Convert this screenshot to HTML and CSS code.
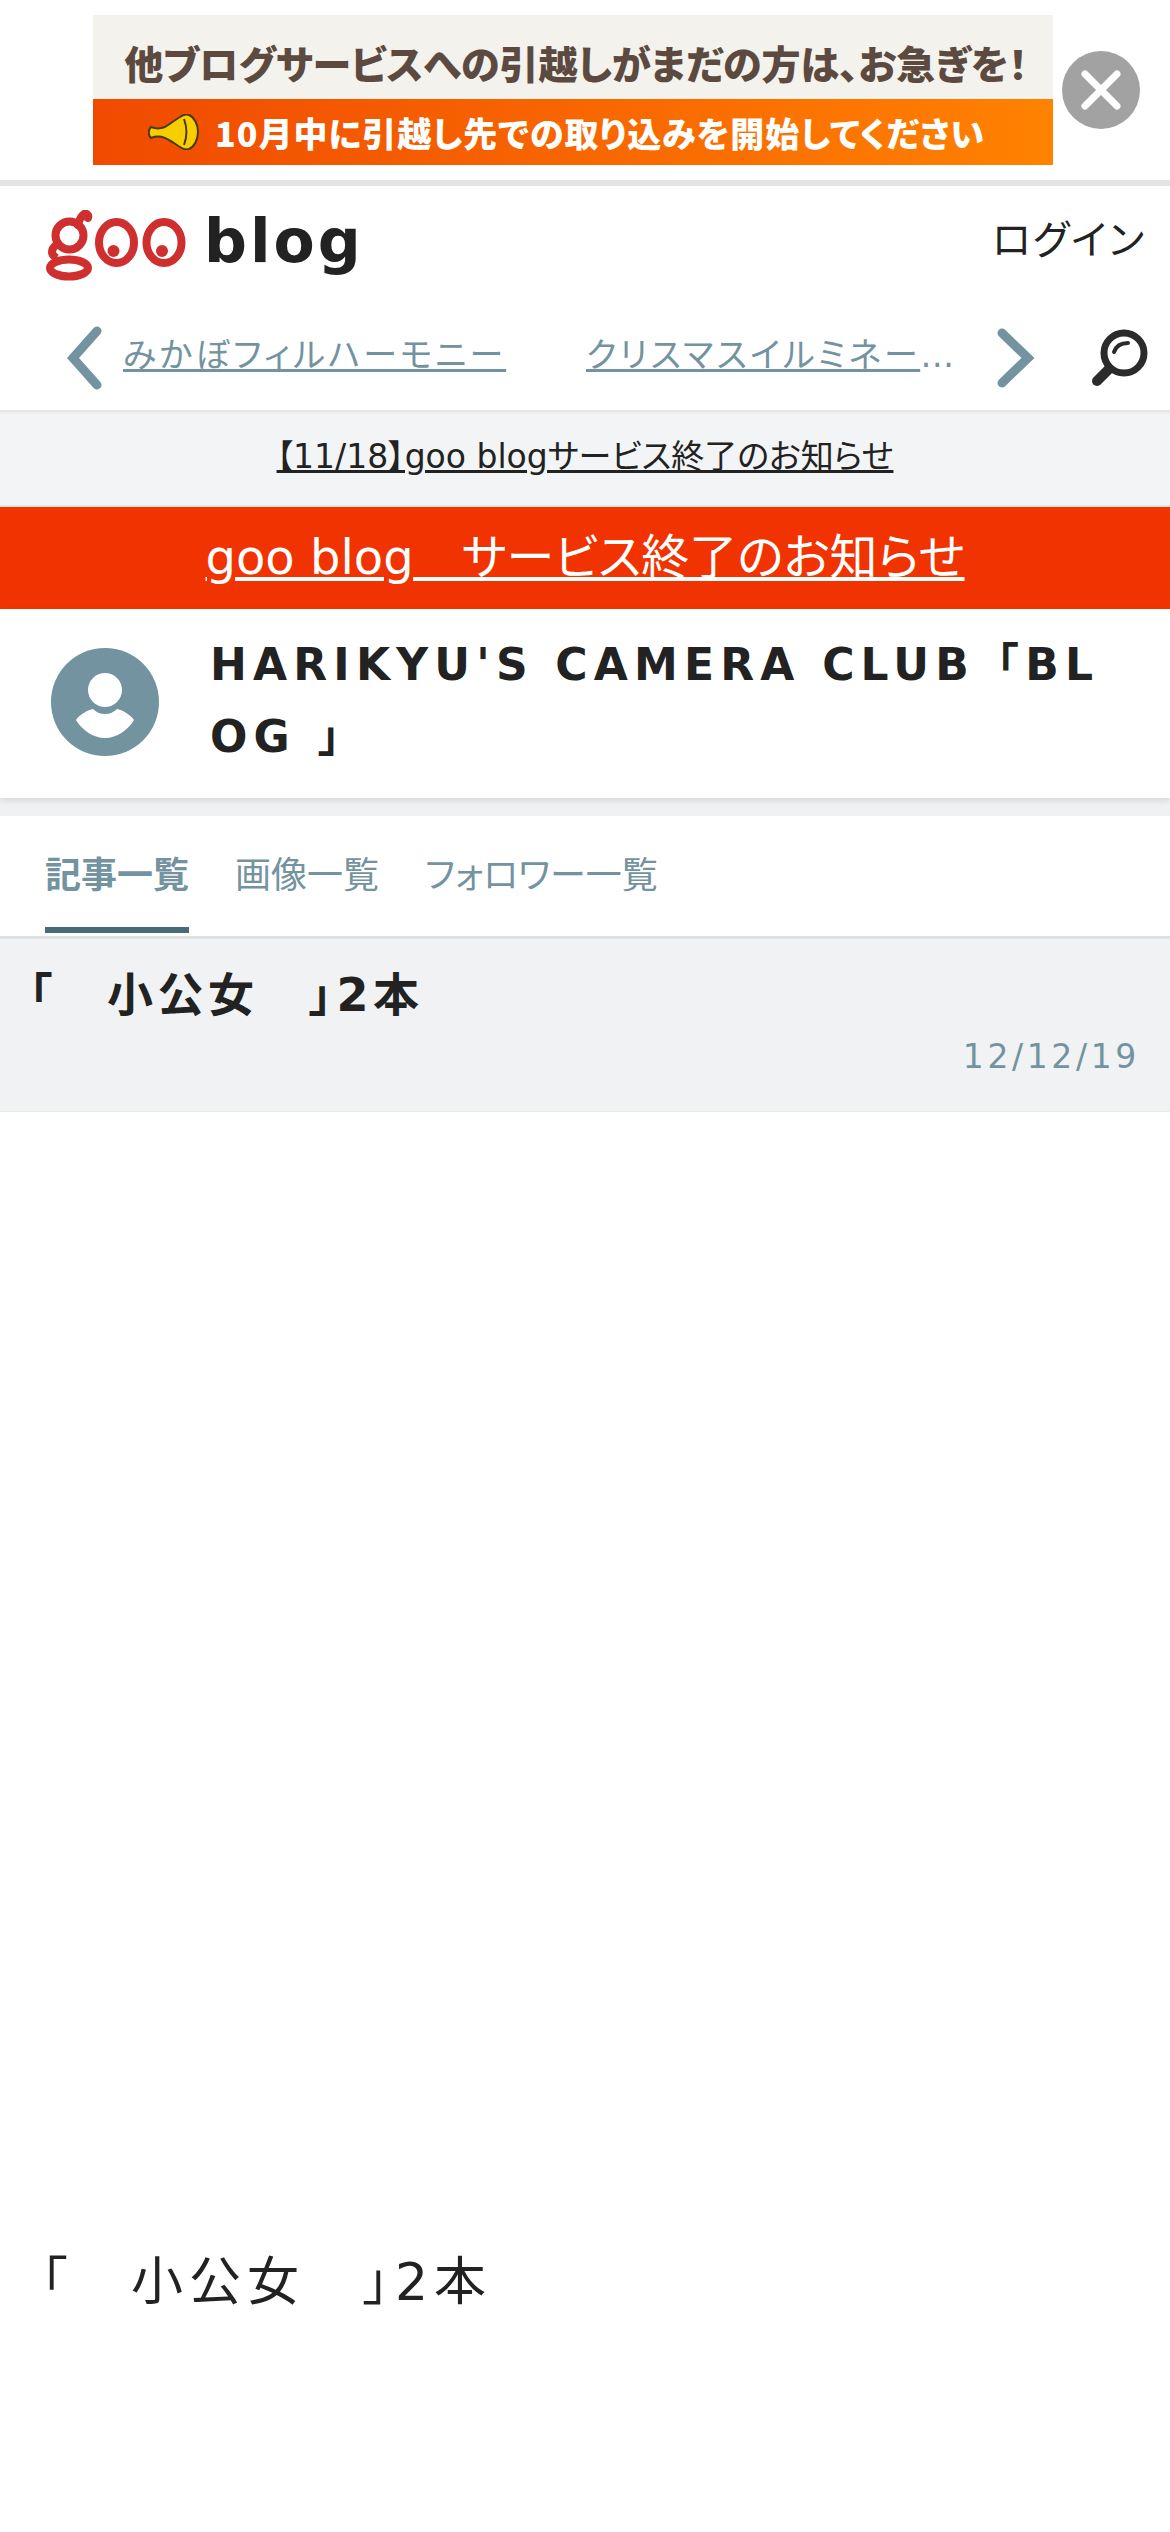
FILE: index.html
```html
<!DOCTYPE html>
<html lang="ja">
<head>
<meta charset="utf-8"/>
<meta content="width=device-width, initial-scale=1.0" name="viewport"/>
<title>HARIKYU'S CAMERA CLUB「BLOG 」</title>
<link rel="stylesheet" href="styles.css">
</head>
<body>
<div class="banner">
  <a class="banner-ad" href="#">
    <div class="ad-top">他ブログサービスへの引越しがまだの方は、お急ぎを！</div>
    <div class="ad-bottom">
      <svg class="ad-horn" viewBox="0 0 52 36" width="52" height="36">
        <path d="M3 13c5 2 9 2 14 0 5-3 10-7 15-10 3-2 6-3 9-2 5 2 9 9 9 17s-4 15-9 17c-3 1-6 0-9-2-5-3-10-7-15-9-5-2-9-2-14 0-3-3-3-8 0-11z" fill="#f7cf00" stroke="#4a3a10" stroke-width="2"/>
        <path d="M36 5c3 8 3 18 0 26" fill="none" stroke="#4a3a10" stroke-width="2"/>
      </svg>
      <span>10月中に引越し先での取り込みを開始してください</span>
    </div>
  </a>
  <button class="banner-close" aria-label="閉じる">
    <svg viewBox="0 0 78 78" width="78" height="78"><path d="M23 23l32 32M55 23L23 55" stroke="#fff" stroke-width="7" stroke-linecap="round" fill="none"/></svg>
  </button>
</div>

<header class="site-header">
  <div class="logo-row">
    <a class="logo" href="#">
      <svg viewBox="0 0 141 72" width="141" height="72" role="img" aria-label="goo">
        <g fill="none" stroke="#cf2f2f" stroke-width="8">
          <ellipse cx="24.5" cy="25.5" rx="14" ry="14"/>
          <path d="M33 15c1-4 3-9 6-11 3-1 5 1 4 4" stroke-linecap="round"/>
          <path d="M11 35c-5 4-6 10 1 13"/>
          <ellipse cx="24" cy="58" rx="19" ry="8.5"/>
          <ellipse cx="71.5" cy="32.5" rx="17.5" ry="20.5"/>
          <ellipse cx="119" cy="32.5" rx="17.5" ry="20.5"/>
        </g>
        <circle cx="68.5" cy="41" r="6" fill="#cf2f2f"/>
        <circle cx="117" cy="41" r="6" fill="#cf2f2f"/>
      </svg>
      <span class="logo-text">blog</span>
    </a>
    <a class="login" href="#">ログイン</a>
  </div>
  <nav class="keyword-row">
    <svg class="chevron-left" viewBox="0 0 44 64" width="44" height="64"><path d="M35 5L11 32l24 27" fill="none" stroke="#7393a0" stroke-width="9" stroke-linecap="round"/></svg>
    <a class="keyword keyword-first" href="#">みかぼフィルハーモニー</a>
    <a class="keyword keyword-second" href="#">クリスマスイルミネーション</a>
    <svg class="chevron-right" viewBox="0 0 44 64" width="44" height="64"><path d="M9 7l26 25L9 57" fill="none" stroke="#7393a0" stroke-width="9" stroke-linecap="round"/></svg>
    <svg class="search-icon" viewBox="0 0 64 64" width="64" height="64">
      <circle cx="36" cy="27" r="20" fill="none" stroke="#2b2b2b" stroke-width="7"/>
      <path d="M26 26c2-6 7-9 14-9" fill="none" stroke="#2b2b2b" stroke-width="4" stroke-linecap="round"/>
      <path d="M21 43L9 55" stroke="#2b2b2b" stroke-width="10" stroke-linecap="round"/>
    </svg>
  </nav>
</header>

<div class="notice"><a href="#">【11/18】goo blogサービス終了のお知らせ</a></div>
<div class="alert"><a href="#">goo blog　サービス終了のお知らせ</a></div>

<section class="blog-head">
  <svg class="avatar" viewBox="0 0 108 108" width="108" height="108">
    <circle cx="54" cy="54" r="54" fill="#7393a0"/>
    <circle cx="54" cy="42" r="17" fill="#fff"/>
    <path d="M25 72c4-6 12-10 17-11 3 3 7 5 12 5s9-2 12-5c5 1 13 5 17 11-6 10-17 18-29 18s-23-8-29-18z" fill="#fff"/>
  </svg>
  <h1 class="blog-title">Harikyu's camera club「blog 」</h1>
</section>

<div class="tabs-wrap">
  <ul class="tabs">
    <li class="tab tab-active">記事一覧</li>
    <li class="tab">画像一覧</li>
    <li class="tab">フォロワー一覧</li>
  </ul>
</div>

<div class="entry-row">
  <h2 class="entry-title">「　小公女　」2本</h2>
  <div class="entry-date">12/12/19</div>
</div>

<main class="entry-body">
  <p>「　小公女　」2本</p>
</main>
</body>
</html>
```

FILE: styles.css
```css
body {
  margin: 0;
  font-family: "DejaVu Sans", "Noto Sans CJK JP", sans-serif;
  font-feature-settings: "palt";
  background: #fff;
  color: #222;
  min-height: 2532px;
}
a {
  color: inherit;
}

/* banner */
.banner {
  display: flex;
  height: 180px;
  padding-left: 93px;
  box-sizing: border-box;
}
.banner-ad {
  display: block;
  width: 960px;
  height: 150px;
  margin-top: 15px;
  text-decoration: none;
  font-family: "Noto Sans CJK JP", sans-serif;
  font-weight: 900;
}
.ad-top {
  height: 84px;
  padding-left: 6px;
  line-height: 94px;
  background: #f3f2ec;
  color: #5c4a40;
  font-size: 39px;
  text-align: center;
  white-space: nowrap;
}
.ad-bottom {
  display: flex;
  align-items: center;
  height: 66px;
  padding-left: 55px;
  gap: 15px;
  background: linear-gradient(90deg, #f04a00, #ff8200);
  color: #fff;
  font-size: 34px;
  letter-spacing: 1px;
  white-space: nowrap;
}
.banner-close {
  width: 78px;
  height: 78px;
  margin: 51px 0 0 9px;
  padding: 0;
  border: none;
  border-radius: 50%;
  background: #a2a2a2;
}
.banner-close svg {
  display: block;
}

/* header */
.site-header {
  border-top: 6px solid #e2e4e5;
  height: 224px;
  background: #fff;
}
.logo-row {
  display: flex;
  justify-content: space-between;
  align-items: center;
  height: 72px;
  padding: 24px 24px 0 45px;
}
.logo {
  display: flex;
  align-items: center;
  gap: 18px;
  text-decoration: none;
}
.logo-text {
  font-size: 60px;
  font-weight: bold;
  line-height: 72px;
  letter-spacing: 3px;
  margin-top: -10px;
}
.login {
  font-size: 40px;
  letter-spacing: 2px;
  text-decoration: none;
  margin-top: -18px;
}
.keyword-row {
  display: flex;
  align-items: center;
  height: 64px;
  margin-top: 44px;
  padding-left: 62px;
}
.keyword {
  font-size: 34px;
  letter-spacing: 3px;
  color: #7393a0;
  white-space: nowrap;
  overflow: hidden;
  text-overflow: ellipsis;
  line-height: 50px;
  margin-top: -6px;
}
.keyword-first {
  margin-left: 17px;
  width: 386px;
}
.keyword-second {
  margin-left: 77px;
  width: 374px;
}
.chevron-right {
  margin-left: 33px;
}
.search-icon {
  margin-left: 51px;
}

/* notices */
.notice {
  height: 95px;
  line-height: 94px;
  background: #f2f4f5;
  border-bottom: 2px solid #e8e4e2;
  text-align: center;
  font-size: 33px;
  box-shadow: inset 0 5px 5px -4px rgba(0, 0, 0, 0.1);
}
.alert {
  height: 102px;
  line-height: 100px;
  background: #f03300;
  color: #fff;
  text-align: center;
  font-size: 48px;
}

/* blog head */
.blog-head {
  display: flex;
  align-items: flex-start;
  height: 189px;
  padding-left: 51px;
  box-sizing: border-box;
  background: #fff;
  box-shadow: 0 3px 6px rgba(0, 0, 0, 0.1);
  position: relative;
}
.avatar {
  flex: none;
  margin-top: 39px;
}
.blog-title {
  margin: 20px 0 0 51px;
  width: 890px;
  font-size: 44px;
  font-feature-settings: normal;
  line-height: 72px;
  font-weight: bold;
  letter-spacing: 6.2px;
  text-transform: uppercase;
  word-break: break-all;
}

/* tabs */
.tabs-wrap {
  padding-top: 18px;
  background: #eff1f3;
}
.tabs {
  display: flex;
  gap: 46px;
  list-style: none;
  margin: 0;
  padding: 0 0 3px 45px;
  background: #fff;
  border-bottom: 3px solid #dde1e4;
}
.tab {
  padding: 33px 0 24px;
  line-height: 54px;
  font-size: 36px;
  color: #7393a0;
  border-bottom: 6px solid transparent;
}
.tab-active {
  font-weight: bold;
  border-bottom-color: #476b78;
}

/* entry */
.entry-row {
  height: 173px;
  padding: 32px 30px 0 29px;
  box-sizing: border-box;
  background: #f0f2f4;
  border-bottom: 1px solid #e9ebed;
}
.entry-title {
  margin: 0;
  font-size: 46px;
  line-height: 48px;
  font-weight: bold;
  letter-spacing: 4.5px;
}
.entry-date {
  margin-top: 14px;
  text-align: right;
  font-size: 33px;
  line-height: 48px;
  letter-spacing: 0.11em;
  color: #7393a0;
}
.entry-body p {
  margin: 1130px 0 0 41px;
  font-size: 52px;
  line-height: 80px;
  letter-spacing: 6px;
}
```
